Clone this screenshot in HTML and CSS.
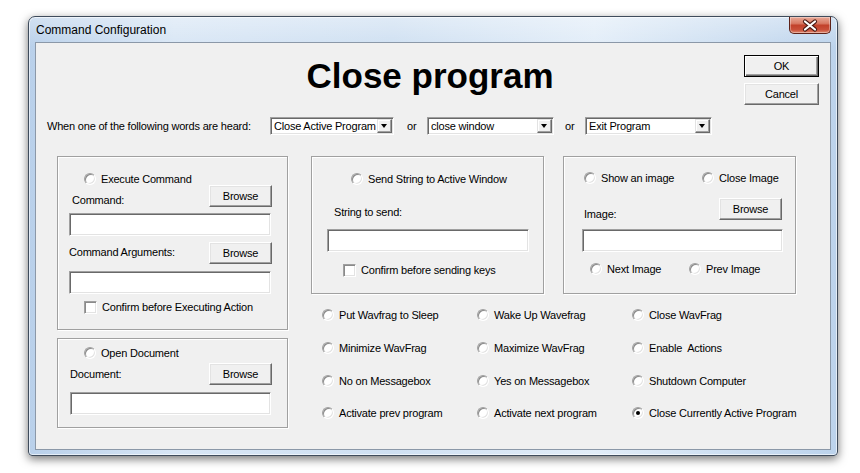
FILE: index.html
```html
<!DOCTYPE html>
<html>
<head>
<meta charset="utf-8">
<link rel="stylesheet" href="styles.css">
</head>
<body>
<div class="window">
  <div class="titlebar">
    <span class="title-text">Command Configuration</span>
    <span class="close-btn">
      <svg width="40" height="15" viewBox="0 0 40 15">
        <path d="M15 3.5 L25 11.5 M25 3.5 L15 11.5" stroke="#4a1a14" stroke-width="4.2" stroke-linecap="round" fill="none"/>
        <path d="M15 3.5 L25 11.5 M25 3.5 L15 11.5" stroke="#ffffff" stroke-width="2.2" stroke-linecap="round" fill="none"/>
      </svg>
    </span>
  </div>
  <div class="client">
    <div class="header">
      <div class="hdr-spacer"></div>
      <h1 class="big-title">Close program</h1>
      <div class="hdr-buttons">
        <span class="btn btn-default">OK</span>
        <span class="btn btn-cancel">Cancel</span>
      </div>
    </div>

    <div class="words-row">
      <span class="words-label">When one of the following words are heard:</span>
      <span class="combo combo-1"><span class="combo-text">Close Active Program</span><span class="combo-arrow"></span></span>
      <span class="or or-1">or</span>
      <span class="combo combo-2"><span class="combo-text">close window</span><span class="combo-arrow"></span></span>
      <span class="or or-2">or</span>
      <span class="combo combo-3"><span class="combo-text">Exit Program</span><span class="combo-arrow"></span></span>
    </div>

    <div class="main">
      <div class="left-col">
        <div class="group g-exec">
          <div class="opt exec-opt"><span class="radio"></span>Execute Command</div>
          <div class="field-row exec-r1"><span class="lbl">Command:</span><span class="btn browse">Browse</span></div>
          <div class="input exec-in1"></div>
          <div class="field-row exec-r2"><span class="lbl">Command Arguments:</span><span class="btn browse">Browse</span></div>
          <div class="input exec-in2"></div>
          <div class="check-row exec-check"><span class="check"></span>Confirm before Executing Action</div>
        </div>
        <div class="group g-doc">
          <div class="opt doc-opt"><span class="radio"></span>Open Document</div>
          <div class="field-row doc-r1"><span class="lbl">Document:</span><span class="btn browse">Browse</span></div>
          <div class="input doc-in"></div>
        </div>
      </div>

      <div class="right-part">
        <div class="top-groups">
          <div class="group g-send">
            <div class="opt send-opt"><span class="radio"></span>Send String to Active Window</div>
            <div class="lbl send-lbl">String to send:</div>
            <div class="input send-in"></div>
            <div class="check-row send-check"><span class="check"></span>Confirm before sending keys</div>
          </div>
          <div class="group g-img">
            <div class="opt-pair img-top">
              <div class="opt img-show"><span class="radio"></span>Show an image</div>
              <div class="opt"><span class="radio"></span>Close Image</div>
            </div>
            <div class="field-row img-r1"><span class="lbl">Image:</span><span class="btn browse">Browse</span></div>
            <div class="input img-in"></div>
            <div class="opt-pair img-bottom">
              <div class="opt img-next"><span class="radio"></span>Next Image</div>
              <div class="opt"><span class="radio"></span>Prev Image</div>
            </div>
          </div>
        </div>

        <div class="radio-grid">
          <div class="opt"><span class="radio"></span>Put Wavfrag to Sleep</div>
          <div class="opt"><span class="radio"></span>Wake Up Wavefrag</div>
          <div class="opt"><span class="radio"></span>Close WavFrag</div>
          <div class="opt"><span class="radio"></span>Minimize WavFrag</div>
          <div class="opt"><span class="radio"></span>Maximize WavFrag</div>
          <div class="opt"><span class="radio"></span>Enable&nbsp; Actions</div>
          <div class="opt"><span class="radio"></span>No on Messagebox</div>
          <div class="opt"><span class="radio"></span>Yes on Messagebox</div>
          <div class="opt"><span class="radio"></span>Shutdown Computer</div>
          <div class="opt"><span class="radio"></span>Activate prev program</div>
          <div class="opt"><span class="radio"></span>Activate next program</div>
          <div class="opt"><span class="radio checked"></span>Close Currently Active Program</div>
        </div>
      </div>
    </div>
  </div>
</div>
</body>
</html>
```

FILE: styles.css
```css
* { box-sizing: border-box; }

html, body {
  margin: 0;
  padding: 0;
  background: #ffffff;
  width: 860px;
  height: 473px;
  overflow: hidden;
}

body {
  font-family: "Liberation Sans", Arial, sans-serif;
  font-size: 11px;
  letter-spacing: -0.2px;
  color: #000;
}

/* ---------- window frame ---------- */
.window {
  margin: 16px 0 0 28px;
  width: 810px;
  height: 440px;
  border: 1px solid #3f4c5c;
  border-radius: 7px 7px 4px 4px;
  background:
    linear-gradient(to bottom, rgba(255,255,255,0.35), rgba(255,255,255,0) 30px),
    linear-gradient(to right, #b9d0ea 0%, #d8e6f5 18%, #cfe0f2 45%, #e2edf8 70%, #bcd3ec 100%);
  box-shadow: 0 3px 10px rgba(0,0,0,0.55), inset 0 0 0 1px rgba(255,255,255,0.6);
  display: flex;
  flex-direction: column;
  padding: 0 6px 5px 6px;
}

.titlebar {
  height: 25px;
  display: flex;
  align-items: center;
  padding-left: 1px;
}

.title-text {
  font-size: 12px;
  letter-spacing: 0;
  color: #000;
  margin-top: 1px;
}

.close-btn {
  margin-left: auto;
  align-self: flex-start;
  width: 42px;
  height: 17px;
  border: 1px solid #5e2218;
  border-top: none;
  border-radius: 0 0 5px 5px;
  background: linear-gradient(to bottom, #e9a997 0%, #d87a64 40%, #c2412b 52%, #c9503a 80%, #e08a70 100%);
  box-shadow: inset 0 0 0 1px rgba(255,255,255,0.35);
  display: flex;
  align-items: center;
  justify-content: center;
}

.client {
  flex: 1;
  border: 1px solid #8b98a8;
  background: #f0f0f0;
}

/* ---------- header ---------- */
.header {
  display: grid;
  grid-template-columns: 1fr auto 1fr;
  padding-top: 12px;
  height: 62px;
}

.big-title {
  margin: 1px 0 0 0;
  font-family: "Liberation Sans", Arial, sans-serif;
  font-weight: bold;
  font-size: 35px;
  line-height: 40px;
  letter-spacing: 0;
  transform: translateX(-3px);
}

.hdr-buttons {
  justify-self: end;
  margin-right: 11px;
  display: flex;
  flex-direction: column;
  gap: 6px;
}

/* ---------- buttons ---------- */
.btn {
  display: flex;
  align-items: center;
  justify-content: center;
  background: #f0f0f0;
  border: 1px solid;
  border-color: #ffffff #696969 #696969 #ffffff;
  box-shadow: inset -1px -1px 0 #a0a0a0, inset 1px 1px 0 #e3e3e3;
  font-size: 11px;
}

.btn-default, .btn-cancel {
  width: 75px;
  height: 22px;
}

.btn-default {
  border: 1px solid #000;
  box-shadow: inset 1px 1px 0 #ffffff, inset -1px -1px 0 #696969, inset -2px -2px 0 #a0a0a0;
}

.browse {
  width: 63px;
  height: 22px;
}

/* ---------- words row ---------- */
.words-row {
  display: flex;
  align-items: center;
  margin-top: 12px;
  height: 18px;
  padding-left: 11px;
}

.words-label {
  flex: 0 0 223px;
}

.combo {
  display: flex;
  align-items: center;
  height: 18px;
  background: #fff;
  border: 1px solid;
  border-color: #a0a0a0 #ffffff #ffffff #a0a0a0;
  box-shadow: inset 1px 1px 0 #696969, inset -1px -1px 0 #e3e3e3;
  padding: 1px;
}

.combo-1 { width: 124px; }
.combo-2 { width: 127px; }
.combo-3 { width: 127px; }

.combo-text {
  flex: 1;
  line-height: 14px;
  padding-left: 2px;
  white-space: nowrap;
  overflow: hidden;
}

.combo-arrow {
  width: 15px;
  height: 14px;
  background: #f0f0f0;
  border: 1px solid;
  border-color: #e3e3e3 #696969 #696969 #e3e3e3;
  box-shadow: inset -1px -1px 0 #a0a0a0, inset 1px 1px 0 #ffffff;
  position: relative;
}

.combo-arrow::after {
  content: "";
  position: absolute;
  left: 3px;
  top: 4px;
  border-left: 3.5px solid transparent;
  border-right: 3.5px solid transparent;
  border-top: 4px solid #000;
}

.or-1 { width: 33px; padding-left: 13px; }
.or-2 { width: 31px; padding-left: 11px; }

/* ---------- main area ---------- */
.main {
  display: flex;
  margin-top: 21px;
  padding-left: 21px;
}

.left-col {
  width: 231px;
  display: flex;
  flex-direction: column;
  gap: 8px;
}

.right-part {
  margin-left: 23px;
}

.top-groups {
  display: flex;
  gap: 19px;
}

.group {
  border: 1px solid #a0a0a0;
  box-shadow: 1px 1px 0 #ffffff, inset 1px 1px 0 #ffffff;
}

.opt {
  display: flex;
  align-items: center;
  height: 14px;
  line-height: 14px;
  white-space: nowrap;
}

.radio {
  flex: 0 0 12px;
  width: 12px;
  height: 12px;
  border-radius: 50%;
  background: #fff;
  border: 1px solid;
  border-color: #a0a0a0 #ffffff #ffffff #a0a0a0;
  box-shadow: inset 1px 1px 0 #8a8a8a, inset -1px -1px 0 #e3e3e3;
  margin-right: 5px;
  position: relative;
}

.radio.checked::after {
  content: "";
  position: absolute;
  left: 3px;
  top: 3px;
  width: 4px;
  height: 4px;
  border-radius: 50%;
  background: #000;
}

.check-row {
  display: flex;
  align-items: center;
  height: 14px;
  line-height: 14px;
  white-space: nowrap;
}

.check {
  flex: 0 0 13px;
  width: 13px;
  height: 13px;
  background: #fff;
  border: 1px solid;
  border-color: #a0a0a0 #ffffff #ffffff #a0a0a0;
  box-shadow: inset 1px 1px 0 #8a8a8a, inset -1px -1px 0 #e3e3e3;
  margin-right: 5px;
}

.field-row {
  display: flex;
  justify-content: space-between;
  align-items: flex-start;
  height: 22px;
}

.lbl {
  line-height: 14px;
  white-space: nowrap;
}

.input {
  background: #fff;
  height: 23px;
  border: 1px solid;
  border-color: #a0a0a0 #ffffff #ffffff #a0a0a0;
  box-shadow: inset 1px 1px 0 #696969, inset -1px -1px 0 #e3e3e3;
}

/* execute command group */
.g-exec {
  height: 174px;
  padding-top: 15px;
}
.exec-opt { margin-left: 26px; }
.exec-r1 { margin-top: -1px; padding-right: 15px; }
.exec-r1 .lbl { margin-left: 14px; margin-top: 8px; }
.exec-in1 { margin: 6px 0 0 11px; width: 202px; }
.exec-r2 { margin-top: 6px; padding-right: 15px; }
.exec-r2 .lbl { margin-left: 11px; margin-top: 3px; }
.exec-in2 { margin: 7px 0 0 11px; width: 202px; }
.exec-check { margin: 6px 0 0 26px; }

/* open document group */
.g-doc {
  height: 90px;
  padding-top: 7px;
}
.doc-opt { margin-left: 26px; }
.doc-r1 { margin-top: 3px; padding-right: 15px; }
.doc-r1 .lbl { margin-left: 12px; margin-top: 4px; }
.doc-in { margin: 7px 0 0 12px; width: 201px; }

/* send string group */
.g-send {
  width: 233px;
  height: 138px;
  padding-top: 15px;
}
.send-opt { margin-left: 39px; }
.send-lbl { margin: 19px 0 0 22px; }
.send-in { margin: 10px 0 0 15px; width: 202px; }
.send-check { margin: 11px 0 0 31px; }

/* image group */
.g-img {
  width: 233px;
  height: 138px;
  padding-top: 14px;
}
.opt-pair { display: flex; }
.img-top { margin-left: 20px; }
.img-show { width: 118px; }
.img-r1 { margin-top: 13px; padding-right: 13px; }
.img-r1 .lbl { margin-left: 20px; margin-top: 9px; }
.img-in { margin: 9px 0 0 18px; width: 201px; }
.img-bottom { margin: 10px 0 0 26px; }
.img-next { width: 99px; }

/* radio grid */
.radio-grid {
  display: grid;
  grid-template-columns: repeat(3, 155px);
  grid-auto-rows: 32.7px;
  align-items: center;
  margin-top: 5px;
  padding-left: 11px;
}
```
